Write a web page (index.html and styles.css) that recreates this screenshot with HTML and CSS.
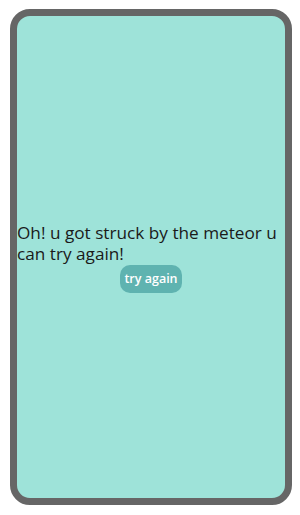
FILE: index.html
```html
<!DOCTYPE html>
<html>
<head>
<meta charset="utf-8">
<link rel="stylesheet" href="styles.css">
</head>
<body>
<div class="frame">
  <p class="msg">Oh! u got struck by the meteor u can try again!</p>
  <button class="retry">try again</button>
</div>
</body>
</html>
```
FILE: styles.css
```css
html, body { margin: 0; padding: 0; background: #fff; }
body { padding: 9px 8px 10px 10px; }
.frame {
  box-sizing: border-box;
  width: 282px;
  height: 496px;
  border: 7px solid #666666;
  border-radius: 20px;
  background: #9ee3d9;
  display: flex;
  flex-direction: column;
  justify-content: center;
  align-items: center;
  font-family: "Open Sans", sans-serif;
}
.msg {
  margin: 0;
  align-self: stretch;
  font-size: 17.2px;
  line-height: 21px;
  color: #1a1a1a;
}
.retry {
  margin-top: 1px;
  width: 62px;
  height: 28px;
  border: none;
  border-radius: 10px;
  background: #5fb3b0;
  color: #fff;
  font-family: "Open Sans", sans-serif;
  font-size: 12.5px;
  font-weight: 600;
  padding: 0;
}
```
